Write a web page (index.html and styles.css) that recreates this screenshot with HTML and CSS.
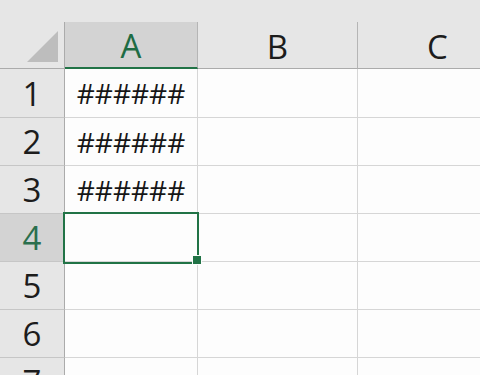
FILE: index.html
```html
<!DOCTYPE html>
<html>
<head>
    <title>Sheet</title>
    <link rel="stylesheet" href="styles.css">
</head>
<body>
    <div class="sheet">
        <div class="top-strip"></div>
        <div class="grid">
            <div class="corner"><span class="corner-tri"></span></div>
            <div class="col-head active">A</div>
            <div class="col-head">B</div>
            <div class="col-head">C</div>

            <div class="row-head">1</div>
            <div class="cell">######</div>
            <div class="cell"></div>
            <div class="cell"></div>

            <div class="row-head">2</div>
            <div class="cell">######</div>
            <div class="cell"></div>
            <div class="cell"></div>

            <div class="row-head">3</div>
            <div class="cell">######</div>
            <div class="cell"></div>
            <div class="cell"></div>

            <div class="row-head active">4</div>
            <div class="cell selected"><span class="sel-box"></span><span class="fill-handle"></span></div>
            <div class="cell"></div>
            <div class="cell"></div>

            <div class="row-head">5</div>
            <div class="cell"></div>
            <div class="cell"></div>
            <div class="cell"></div>

            <div class="row-head">6</div>
            <div class="cell"></div>
            <div class="cell"></div>
            <div class="cell"></div>

            <div class="row-head">7</div>
            <div class="cell"></div>
            <div class="cell"></div>
            <div class="cell"></div>
        </div>
    </div>
</body>
</html>
```

FILE: styles.css
```css
html, body {
    margin: 0;
    padding: 0;
    background-color: #fdfdfd;
    overflow: hidden;
}

.sheet {
    width: 480px;
    height: 375px;
    overflow: hidden;
    font-family: "Open Sans", "Noto Sans", sans-serif;
    color: #1c1c1c;
}

.top-strip {
    height: 22px;
    background-color: #e6e6e6;
}

.grid {
    display: grid;
    grid-template-columns: 65px 133px 160px 160px;
    grid-template-rows: 47px 49px repeat(6, 48px);
    width: 518px;
}

.grid > div {
    box-sizing: border-box;
    border-right: 1px solid #d6d6d6;
    border-bottom: 1px solid #d6d6d6;
    display: flex;
    align-items: center;
    justify-content: center;
    position: relative;
}

.corner {
    background-color: #e6e6e6;
}

.grid > .corner,
.grid > .row-head {
    border-right-color: #ababab;
}

.grid > .corner,
.grid > .col-head {
    border-bottom-color: #ababab;
}

.corner-tri {
    position: absolute;
    right: 6px;
    bottom: 6px;
    width: 0;
    height: 0;
    border-left: 31px solid transparent;
    border-bottom: 31px solid #bdbdbd;
}

.col-head {
    background-color: #e6e6e6;
    font-size: 33px;
    line-height: 1;
    padding-top: 2px;
}

.grid > .col-head {
    border-right-color: #b5b5b5;
}

.grid > .col-head.active {
    background-color: #d3d3d3;
    color: #1e6c44;
    border-bottom: 2px solid #217346;
}

.row-head {
    background-color: #e6e6e6;
    font-size: 33px;
    line-height: 1;
}

.grid > .row-head {
    border-bottom-color: #c6c6c6;
}

.row-head.active {
    background-color: #d3d3d3;
    color: #2a6f4d;
}

.cell {
    background-color: #fdfdfd;
    font-size: 28px;
    line-height: 1;
    color: #161616;
}

.grid > .selected {
    z-index: 2;
}

.sel-box {
    position: absolute;
    left: -2px;
    top: -2px;
    right: -2px;
    bottom: -3px;
    border: 2px solid #217346;
}

.fill-handle {
    position: absolute;
    right: -5px;
    bottom: -4px;
    width: 8px;
    height: 8px;
    background-color: #217346;
    border: 1px solid #fdfdfd;
}
```
